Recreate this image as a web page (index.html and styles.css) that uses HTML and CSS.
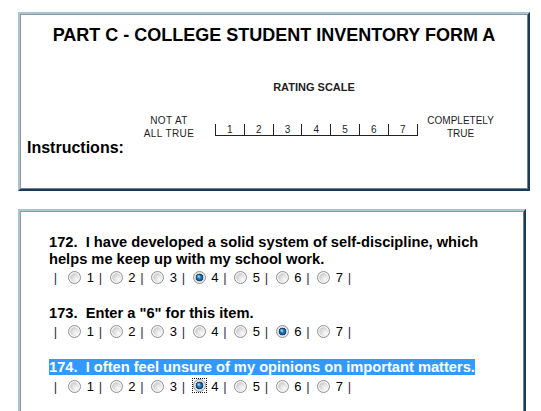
FILE: index.html
```html
<!DOCTYPE html>
<html lang="en">
<head>
<meta charset="utf-8">
<title>Part C - College Student Inventory Form A</title>
<link rel="stylesheet" href="styles.css">
</head>
<body>
<div class="panel header">
  <h1 class="title">PART C - COLLEGE STUDENT INVENTORY FORM A</h1>
  <div class="instr-row">
    <div class="instr">Instructions:</div>
    <div class="scale-img">
      <div class="scale-title">RATING SCALE</div>
      <div class="scale-row">
        <div class="end-label left">NOT AT<br>ALL TRUE</div>
        <div class="scale">
          <span class="cell">1</span><span class="cell">2</span><span class="cell">3</span><span class="cell">4</span><span class="cell">5</span><span class="cell">6</span><span class="cell last">7</span>
        </div>
        <div class="end-label right">COMPLETELY<br>TRUE</div>
      </div>
    </div>
  </div>
</div>

<div class="panel questions">
  <div class="item">
    <div class="q">172.&nbsp; I have developed a solid system of self-discipline, which helps me keep up with my school work.</div>
    <div class="opts">&nbsp;<span class="bar">|</span>&nbsp; <input type="radio" name="q172" value="1"> 1 <span class="bar">|</span> <input type="radio" name="q172" value="2"> 2 <span class="bar">|</span> <input type="radio" name="q172" value="3"> 3 <span class="bar">|</span> <input type="radio" name="q172" value="4" checked> 4 <span class="bar">|</span> <input type="radio" name="q172" value="5"> 5 <span class="bar">|</span> <input type="radio" name="q172" value="6"> 6 <span class="bar">|</span> <input type="radio" name="q172" value="7"> 7 <span class="bar">|</span></div>
  </div>
  <div class="item">
    <div class="q">173.&nbsp; Enter a "6" for this item.</div>
    <div class="opts">&nbsp;<span class="bar">|</span>&nbsp; <input type="radio" name="q173" value="1"> 1 <span class="bar">|</span> <input type="radio" name="q173" value="2"> 2 <span class="bar">|</span> <input type="radio" name="q173" value="3"> 3 <span class="bar">|</span> <input type="radio" name="q173" value="4"> 4 <span class="bar">|</span> <input type="radio" name="q173" value="5"> 5 <span class="bar">|</span> <input type="radio" name="q173" value="6" checked> 6 <span class="bar">|</span> <input type="radio" name="q173" value="7"> 7 <span class="bar">|</span></div>
  </div>
  <div class="item">
    <div class="q"><span class="sel">174.&nbsp; I often feel unsure of my opinions on important matters.</span></div>
    <div class="opts">&nbsp;<span class="bar">|</span>&nbsp; <input type="radio" name="q174" value="1"> 1 <span class="bar">|</span> <input type="radio" name="q174" value="2"> 2 <span class="bar">|</span> <input type="radio" name="q174" value="3"> 3 <span class="bar">|</span> <span class="focus"><input type="radio" name="q174" value="4" checked></span> 4 <span class="bar">|</span> <input type="radio" name="q174" value="5"> 5 <span class="bar">|</span> <input type="radio" name="q174" value="6"> 6 <span class="bar">|</span> <input type="radio" name="q174" value="7"> 7 <span class="bar">|</span></div>
  </div>
</div>
</body>
</html>
```

FILE: styles.css
```css
html, body {
  background: #ffffff;
}

body {
  margin: 0;
  padding: 12px 0 0 18px;
  font-family: "Liberation Sans", Arial, sans-serif;
  color: #000000;
}

.panel {
  width: 508px;
  border-style: solid;
  border-width: 2px;
  border-color: #a9c4d3 #1b3a54 #1b3a54 #a9c4d3;
  box-shadow: inset 1px 1px 0 #8e989e, inset -1px -1px 0 #6a8292;
  background: #ffffff;
}

/* ---------- header panel ---------- */
.header {
  height: 175px;
}

.title {
  margin: 0;
  padding-top: 10px;
  font-size: 18px;
  font-weight: bold;
  line-height: 22px;
  text-align: center;
}

.instr-row {
  display: flex;
  align-items: flex-end;
}

.instr {
  width: 119px;
  box-sizing: border-box;
  padding-left: 7px;
  font-size: 16px;
  font-weight: bold;
  line-height: 19px;
}

.scale-img {
  width: 357px;
  margin-top: 35px;
  padding-bottom: 17px;
  color: #1e1e1e;
}

.scale-title {
  padding-right: 7px;
  font-size: 11px;
  font-weight: bold;
  line-height: 13px;
  text-align: center;
}

.scale-row {
  display: flex;
  align-items: flex-start;
  margin-top: 20px;
}

.end-label {
  font-size: 10px;
  line-height: 13px;
  text-align: center;
}

.end-label.left {
  width: 60px;
  margin-right: 16px;
  letter-spacing: 0.4px;
}

.end-label.right {
  width: 70px;
  margin-left: 8px;
}

.scale {
  display: flex;
  margin-top: 10px;
  border-bottom: 1px solid #222222;
}

.cell {
  width: 28.8px;
  height: 11px;
  box-sizing: border-box;
  border-left: 1px solid #222222;
  font-size: 10px;
  line-height: 12px;
  text-align: center;
}

.cell.last {
  width: 29.8px;
  border-right: 1px solid #222222;
}

/* ---------- questions panel ---------- */
.questions {
  margin-top: 18px;
  box-sizing: border-box;
  padding: 22.5px 0 40px 29px;
}

.item {
  margin-bottom: 17px;
}

.q {
  max-width: 462px;
  font-size: 14.67px;
  font-weight: bold;
  line-height: 17px;
}

.sel {
  background: #3399ff;
  color: #ffffff;
}

.opts {
  height: 20px;
  font-size: 13px;
  line-height: 20px;
  white-space: nowrap;
}

.bar {
  margin: 0 -1px 0 1px;
  color: #3a1f4a;
}

.opts input[type="radio"] {
  -webkit-appearance: none;
  appearance: none;
  width: 13px;
  height: 13px;
  margin: 3px 2px 0 5px;
  padding: 0;
  box-sizing: border-box;
  border: 1px solid #8f9193;
  border-radius: 50%;
  vertical-align: -2px;
  background:
    radial-gradient(circle closest-side, transparent 72%, #f4f4f4 82%),
    radial-gradient(circle at 68% 68%, #fbfbfb 0, #dfdfdf 40%, #b7babe 90%);
}

.opts input[type="radio"]:checked {
  background:
    radial-gradient(circle 2px at 42% 40%, rgba(190, 238, 255, 0.95), rgba(190, 238, 255, 0)),
    radial-gradient(circle closest-side, #3c9fe4 0, #1868ae 40%, #0c3e6c 62%, #3a5366 68%, #d6d8da 74%, #efefef 100%);
}

.focus {
  display: inline-block;
  width: 13px;
  height: 13px;
  margin: 3px 2px 0 5px;
  vertical-align: -2px;
  outline: 1px dotted #111111;
}

.focus input[type="radio"] {
  margin: 0;
  vertical-align: top;
}
```
